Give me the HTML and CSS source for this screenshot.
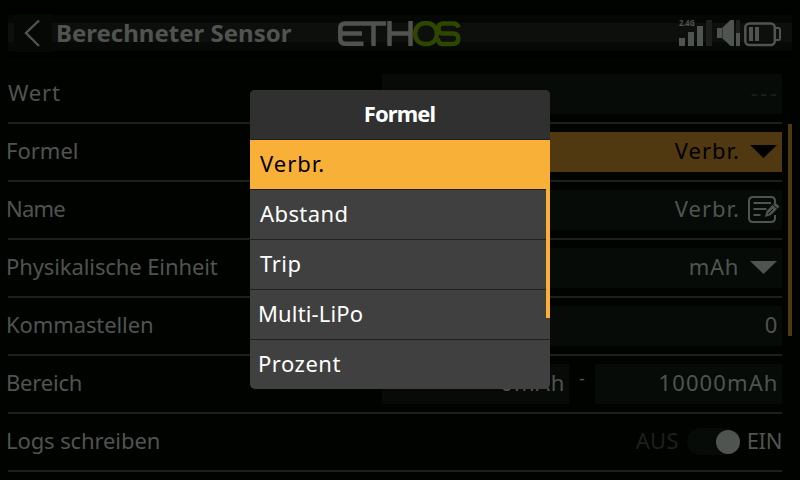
FILE: index.html
```html
<!DOCTYPE html>
<html lang="de">
<head>
<meta charset="utf-8">
<title>Berechneter Sensor</title>
<link rel="stylesheet" href="styles.css">
</head>
<body>
<header class="topbar">
  <button class="back" aria-label="Zurück"><svg width="38" height="38" viewBox="0 0 38 38"><path d="M25 6.500 12 19l13 13" fill="none" stroke="#505450" stroke-width="2.400"/></svg></button>
  <h1 class="title">Berechneter Sensor</h1>
  <svg class="logo" width="124" height="26" viewBox="0 0 124 26" fill="none" stroke-width="4.500">
    <g stroke="#505250"><path d="M25.500 22.700H7Q2.300 22.700 2.300 18V7Q2.300 2.500 7 2.500H48M2.300 12.500H24M35.500 2.500V25M51.500 0V25M51.500 12.500H72M72.500 0V25"/></g>
    <g stroke="#2e4700"><rect x="77.300" y="2.300" width="21.500" height="20.700" rx="9.500"/><path d="M120.500 6.500Q119.500 2.500 115 2.500H105Q100.500 2.500 100.500 7.500T105 12.500H115Q120.300 12.500 120.300 17.500T115 23H105Q100.500 23 99.500 17.500"/></g>
  </svg>
  <div class="status">
    <svg width="108" height="38" viewBox="-4 -8 108 38">
      <text class="band" x="0" y="7" textLength="16" lengthAdjust="spacingAndGlyphs">2.4G</text>
      <g fill="#505450"><path d="M0 19h6v8H0zM9 13h6v14H9zM18 7h6v20h-6zM38 9h5l8.500-8H55v26h-3.500L43 19h-5zM57 14h4v13h-4zM70 8h4v14h-4zM76 8h4v14h-4z"/></g>
      <path d="M27 1h6v26h-6zM57 1h4v13h-4z" fill="#1c201c"/>
      <path d="M43.500 9.500v9.500" stroke="#303430"/>
      <rect x="66.300" y="4.500" width="29.500" height="21.500" rx="4" fill="none" stroke="#505450" stroke-width="2.500"/>
      <path d="M97 9h2.500q1.500 0 1.500 2v8q0 2-1.500 2H97" fill="none" stroke="#505450" stroke-width="2"/>
    </svg>
  </div>
</header>
<main class="content">
  <div class="form">
    <div class="row"><span class="label wert">Wert</span><div class="field faint"><span class="dashes">---</span></div></div>
    <div class="row"><span class="label formel">Formel</span><div class="field active"><span class="verbr">Verbr.</span><i class="arrow"></i></div></div>
    <div class="row"><span class="label name">Name</span><div class="field"><span class="verbr">Verbr.</span>
      <svg class="edit" width="32" height="28" viewBox="0 0 32 28" fill="none" stroke="#505450" stroke-width="2"><path d="M27 7V5q0-4-4-4H5Q1 1 1 5v17q0 4 4 4h18q4 0 4-4v-3M5.500 7h17.500M5.500 13h13M5.500 19h7"/><path d="M17 21l1.500-6L27 6.500l4.500 4L23 19z" fill="#505450" stroke="none"/><path d="M24.500 8.500l5 4.500M20 18l5-5" stroke="#070b07" stroke-width="1"/></svg></div></div>
    <div class="row"><span class="label phys">Physikalische Einheit</span><div class="field"><span class="mah">mAh</span><i class="arrow"></i></div></div>
    <div class="row"><span class="label komma">Kommastellen</span><div class="field"><span class="num">0</span></div></div>
    <div class="row"><span class="label bereich">Bereich</span><div class="range"><div class="field low"><span class="num">0mAh</span></div><span class="dash">-</span><div class="field high"><span class="num">10000mAh</span></div></div></div>
    <div class="row"><span class="label logs">Logs schreiben</span><div class="switch"><span class="off">AUS</span><span class="track"><i class="knob"></i></span><span class="on">EIN</span></div></div>
  </div>
  <div class="scroll"></div>
</main>
<div class="popup">
  <div class="popup-head"><span class="head-text">Formel</span></div>
  <div class="item selected"><span class="verbr">Verbr.</span></div>
  <div class="item"><span class="abstand">Abstand</span></div>
  <div class="item"><span class="trip">Trip</span></div>
  <div class="item snug"><span class="multi">Multi-LiPo</span></div>
  <div class="item snug"><span class="prozent">Prozent</span></div>
  <div class="popup-scroll"></div>
</div>
</body>
</html>
```
FILE: styles.css
```css
* { box-sizing: border-box; }
body {
  margin: 0;
  width: 800px;
  height: 480px;
  overflow: hidden;
  background: #000300;
  color: #505450;
  font: 22px/30px "Noto Sans", "Open Sans", sans-serif;
  white-space: nowrap;
}
.topbar {
  display: flex;
  height: 50px;
  margin: 8px 8px 0;
  padding-top: 6px;
  background: linear-gradient(#000 0 7px, #050705 7px 15px, #0d0f0d 15px 34px, #070907 34px 43px, #000 43px);
}
.back {
  flex: none;
  width: 38px;
  height: 38px;
  margin-left: 6px;
  padding: 0;
  border: 0;
  background: #050805;
}
.back svg { display: block; }
.title {
  width: 280px;
  margin: 4px 0 0 4px;
  font-size: 24px;
  line-height: 30px;
  font-weight: 700;
}
.logo { flex: none; margin: 7px 0 0 2px; }
.status { margin: -3px 9px 0 auto; }
.status svg { display: block; }
.band { font: 700 9px "Noto Sans", sans-serif; fill: #505450; }
.content { display: flex; padding: 8px 8px 0; }
.form { width: 774px; }
.row {
  display: flex;
  justify-content: space-between;
  align-items: flex-start;
  height: 58px;
  padding-top: 8px;
  border-bottom: 2px solid #1c201c;
}
.label { margin: 3px 0 0 -2px; }
.field {
  display: flex;
  justify-content: flex-end;
  width: 400px;
  height: 40px;
  padding: 3px 4px 0 0;
  background: #070b07;
}
.faint { color: #1c201c; }
.active { background: #503810; color: #000; }
.arrow {
  width: 27px;
  height: 13px;
  margin: 10px 1px 0 10px;
  background: #505450;
  clip-path: polygon(0 0, 100% 0, 50% 100%);
}
.active .arrow { background: #000; }
.edit { margin: 3px -2px 0 8px; }
.range { display: flex; }
.low, .high { width: 187px; }
.dash {
  width: 26px;
  text-align: center;
  font-size: 18px;
  line-height: 28px;
}
.switch { display: flex; padding: 3px 0 0; }
.off { color: #1c201c; letter-spacing: 0.300px; }
.track {
  width: 53px;
  height: 27px;
  margin: 3px 7px 0 8px;
  border-radius: 14px;
  background: #070b07;
}
.knob {
  display: block;
  width: 24px;
  height: 24px;
  margin: 2px 0 0 29px;
  border-radius: 50%;
  background: #505450;
}
.on { letter-spacing: -0.400px; }
.scroll {
  width: 4px;
  height: 212px;
  margin: 58px 0 0 6px;
  background: #503810;
}
.popup {
  position: absolute;
  left: 250px;
  top: 90px;
  width: 300px;
  height: 299px;
  overflow: hidden;
  border-radius: 5px;
  background: #404040;
  color: #fff;
}
.popup-head {
  height: 50px;
  padding: 8px 1px 0 0;
  border-bottom: 1px solid #202020;
  background: #303030;
  text-align: center;
  font-weight: 700;
}
.item {
  height: 50px;
  padding: 8px 0 0 10px;
  border-bottom: 1px solid #202020;
}
.snug { padding-left: 8px; }
.item:nth-last-child(2) { border: 0; }
.selected { background: #f8b038; color: #000; }
.popup-scroll {
  position: absolute;
  right: 0;
  top: 50px;
  width: 4px;
  height: 178px;
  background: #f8b038;
}
.head-text { letter-spacing: -0.900px; }
.wert { margin-left: 0; letter-spacing: 0.800px; }
.formel { letter-spacing: 0; }
.name { letter-spacing: -0.800px; }
.phys { letter-spacing: -0.100px; }
.komma { letter-spacing: -0.100px; }
.bereich { letter-spacing: -0.200px; }
.logs { letter-spacing: -0.100px; }
.verbr { letter-spacing: 1px; }
.mah { margin-right: 1px; letter-spacing: 0.700px; }
.num { margin-right: -0.500px; letter-spacing: 1.100px; }
.dashes { margin-right: -1.500px; letter-spacing: 2.500px; }
.abstand { letter-spacing: 0.400px; }
.trip { letter-spacing: 0.500px; }
.multi { letter-spacing: 0.150px; }
.prozent { letter-spacing: 0.500px; }
```
